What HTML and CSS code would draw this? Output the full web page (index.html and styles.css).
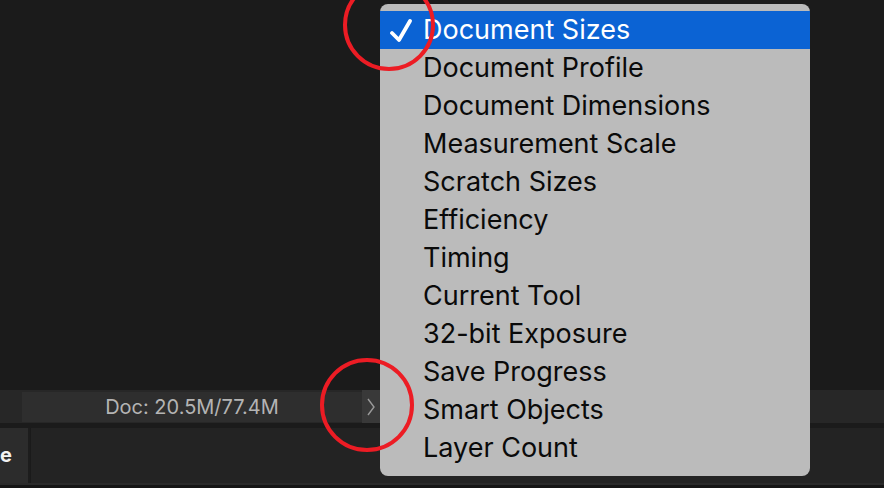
FILE: index.html
```html
<!DOCTYPE html>
<html>
<head>
<meta charset="utf-8">
<link rel="stylesheet" href="styles.css">
</head>
<body>
<div class="app">
  <div class="canvas"></div>
  <div class="statusbar">
    <div class="status-gap"></div>
    <div class="status-field">Doc: 20.5M/77.4M</div>
    <div class="status-btn">
      <svg width="10" height="18" viewBox="0 0 10 18"><polyline points="2,1 8,9 2,17" fill="none" stroke="#9a9a9a" stroke-width="1.4"/></svg>
    </div>
  </div>
  <div class="panels">
    <div class="tab">e</div>
    <div class="panel-body"></div>
  </div>
  <div class="bottom-line"></div>

  <ul class="menu">
    <li class="item active"><svg class="check" width="24" height="24" viewBox="0 0 24 24"><polyline points="3,15 10,22 21,3" fill="none" stroke="#fff" stroke-width="3.8" stroke-linecap="round" stroke-linejoin="round"/></svg>Document Sizes</li>
    <li class="item">Document Profile</li>
    <li class="item">Document Dimensions</li>
    <li class="item">Measurement Scale</li>
    <li class="item">Scratch Sizes</li>
    <li class="item">Efficiency</li>
    <li class="item">Timing</li>
    <li class="item">Current Tool</li>
    <li class="item">32-bit Exposure</li>
    <li class="item">Save Progress</li>
    <li class="item">Smart Objects</li>
    <li class="item">Layer Count</li>
  </ul>

  <svg class="marks" width="884" height="488" viewBox="0 0 884 488">
    <ellipse cx="389" cy="25" rx="44" ry="44" fill="none" stroke="#ec1c24" stroke-width="4"/>
    <ellipse cx="367" cy="405" rx="45" ry="45" fill="none" stroke="#ec1c24" stroke-width="4"/>
  </svg>
</div>
</body>
</html>
```
FILE: styles.css
```css
* { box-sizing: border-box; }
html, body { margin: 0; padding: 0; }
body {
  width: 884px;
  height: 488px;
  overflow: hidden;
  background: #1b1b1b;
  font-family: Inter, "Liberation Sans", sans-serif;
}
.app {
  position: relative;
  width: 884px;
  height: 488px;
  display: flex;
  flex-direction: column;
}
.canvas {
  height: 390px;
  background: #1b1b1b;
}
.statusbar {
  height: 33px;
  background: #272727;
  display: flex;
  align-items: stretch;
  padding: 2px 0 1px 0;
}
.status-gap { width: 22px; }
.status-field {
  width: 340px;
  background: #2e2e2e;
  color: #b4b4b4;
  font-size: 20px;
  display: flex;
  align-items: center;
  justify-content: center;
}
.status-btn {
  width: 18px;
  background: #393939;
  display: flex;
  align-items: center;
  justify-content: center;
  margin: -2px 0 -1px 0;
}
.panels {
  margin-top: 5px;
  height: 55px;
  display: flex;
  background: #1d1d1d;
}
.tab {
  width: 28px;
  background: #2c2c2c;
  color: #f2f2f2;
  font-weight: 700;
  font-size: 20px;
  display: flex;
  align-items: center;
  justify-content: flex-start;
  overflow: hidden;
  padding-left: 0;
  padding-bottom: 2px;
}
.panel-body {
  flex: 1;
  margin-left: 2px;
  background: #232323;
  border-left: 1px solid #1a1a1a;
}
.bottom-line {
  flex: 1;
  background: #151515;
  border-top: 2px solid #2a2a2a;
}
.menu {
  position: absolute;
  left: 380px;
  top: 4px;
  width: 430px;
  height: 472px;
  margin: 0;
  padding: 7px 0 0 0;
  list-style: none;
  background: #bbbbbb;
  border-radius: 8px;
}
.item {
  position: relative;
  height: 38px;
  line-height: 37px;
  padding-left: 43px;
  font-size: 27px;
  color: #0a0a0a;
}
.item.active {
  background: #0b63d4;
  color: #ffffff;
}
.check {
  position: absolute;
  left: 9px;
  top: 7px;
}
.marks {
  position: absolute;
  left: 0;
  top: 0;
  pointer-events: none;
}
```
